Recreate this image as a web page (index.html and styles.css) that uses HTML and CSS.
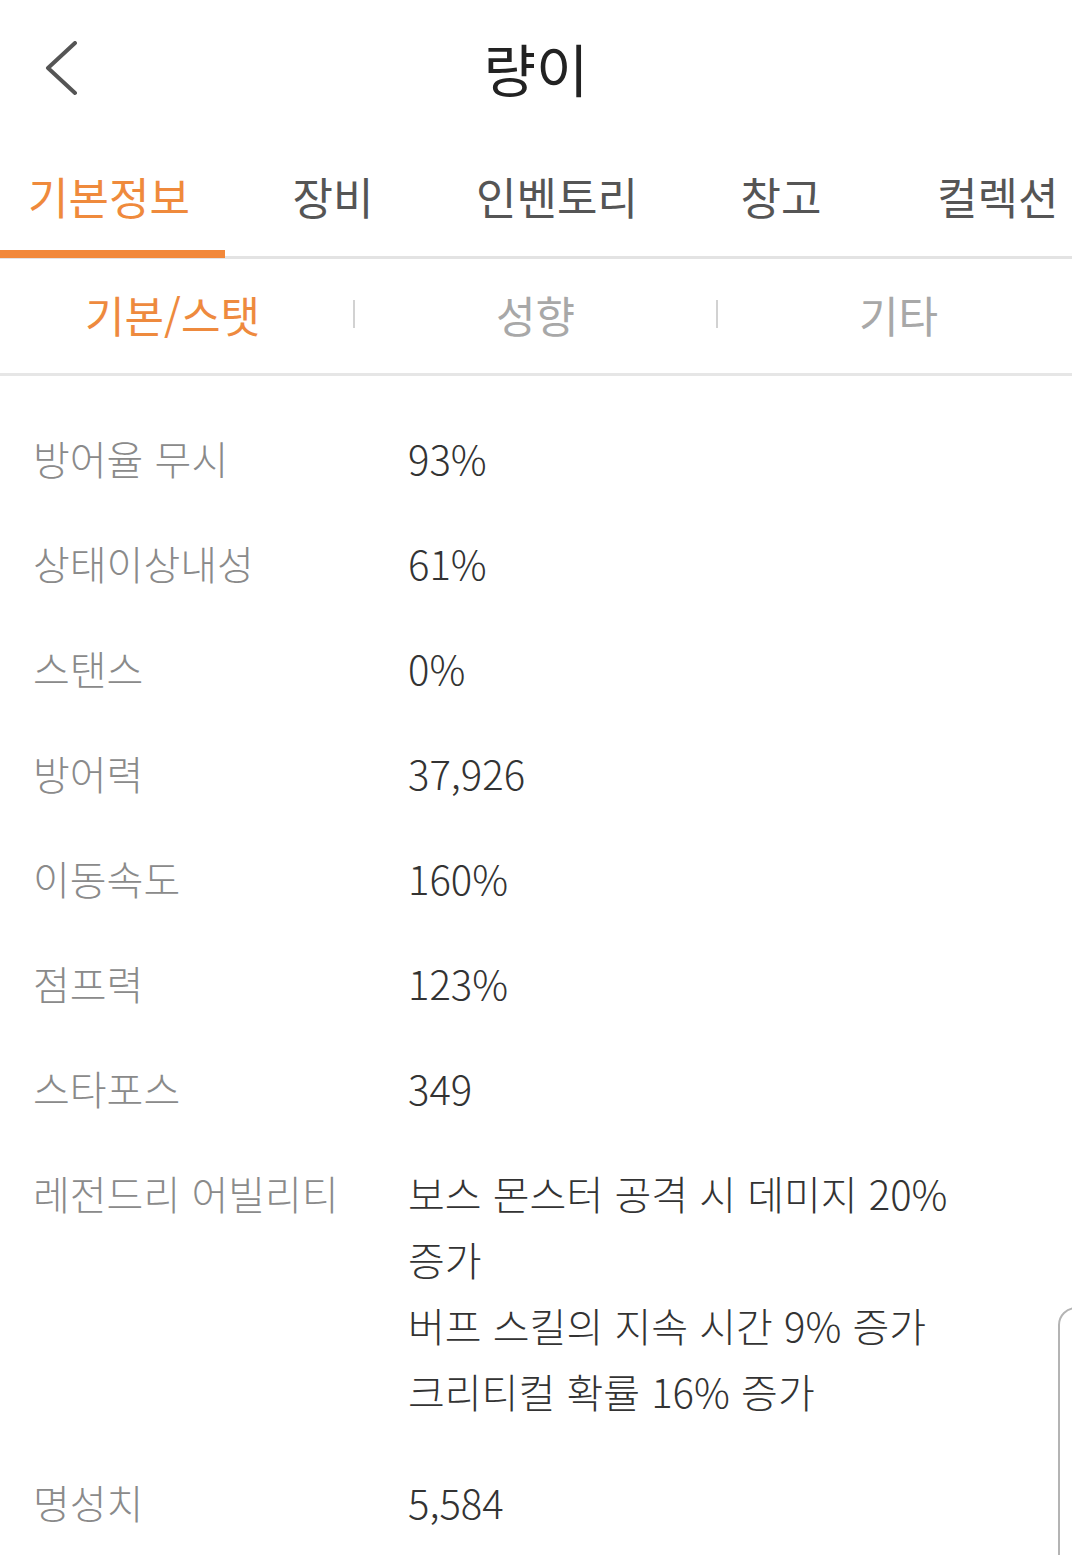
FILE: index.html
```html
<!DOCTYPE html>
<html lang="ko">
<head>
<meta charset="utf-8">
<title>량이</title>
<link rel="stylesheet" href="styles.css">
</head>
<body>
<div class="screen">
  <header class="header">
    <button class="back" aria-label="뒤로">
      <svg width="34" height="56" viewBox="0 0 34 56"><polyline points="31,2 4,27 31,52" fill="none" stroke="#555" stroke-width="4" stroke-linecap="round" stroke-linejoin="round"/></svg>
    </button>
    <h1 class="title">량이</h1>
    <span class="spacer"></span>
  </header>

  <nav class="tabs">
    <div class="tab active">기본정보</div>
    <div class="tab">장비</div>
    <div class="tab">인벤토리</div>
    <div class="tab">창고</div>
    <div class="tab">컬렉션</div>
  </nav>

  <nav class="subtabs">
    <div class="subtab active">기본/스탯</div>
    <div class="subtab">성향</div>
    <div class="subtab last">기타</div>
  </nav>

  <section class="stats">
    <div class="row"><div class="label">방어율 무시</div><div class="value">93%</div></div>
    <div class="row"><div class="label">상태이상내성</div><div class="value">61%</div></div>
    <div class="row"><div class="label">스탠스</div><div class="value">0%</div></div>
    <div class="row"><div class="label">방어력</div><div class="value">37,926</div></div>
    <div class="row"><div class="label">이동속도</div><div class="value">160%</div></div>
    <div class="row"><div class="label">점프력</div><div class="value">123%</div></div>
    <div class="row"><div class="label">스타포스</div><div class="value">349</div></div>
    <div class="row multi"><div class="label">레전드리 어빌리티</div><div class="value"><div>보스 몬스터 공격 시 데미지 20% 증가</div><div>버프 스킬의 지속 시간 9% 증가</div><div>크리티컬 확률 16% 증가</div></div></div>
    <div class="row"><div class="label">명성치</div><div class="value">5,584</div></div>
  </section>

  <div class="sheet-edge"></div>
</div>
</body>
</html>
```
FILE: styles.css
```css
html, body {
  margin: 0;
  padding: 0;
  background: #ffffff;
}
body {
  font-family: "Noto Sans CJK KR", "Noto Sans", sans-serif;
  font-weight: 300;
  color: #333;
}
.screen {
  position: relative;
  width: 1072px;
  height: 1555px;
  overflow: hidden;
}
.header {
  height: 135px;
  display: grid;
  grid-template-columns: 1fr auto 1fr;
  align-items: center;
}
.back {
  justify-self: start;
  margin-left: 44px;
  margin-top: 2px;
  padding: 0;
  border: 0;
  background: none;
  display: flex;
}
.title {
  margin: 0;
  font-size: 57px;
  font-weight: 400;
  color: #222;
  line-height: 1;
}
.tabs {
  height: 121px;
  display: flex;
  border-bottom: 3px solid #e3e3e3;
  margin-left: -3px;
}
.tab {
  flex: 0 0 224px;
  position: relative;
  display: flex;
  align-items: center;
  justify-content: center;
  font-size: 44px;
  color: #555;
  font-weight: 400;
}
.tab:last-child {
  justify-content: flex-start;
  padding-left: 44px;
}
.tab.active {
  color: #ef8a3c;
}
.tab.active::after {
  content: "";
  position: absolute;
  left: 3px;
  right: -4px;
  bottom: -2px;
  height: 8px;
  background: #f2883a;
}
.subtabs {
  height: 117px;
  display: flex;
  align-items: center;
  border-bottom: 3px solid #e6e6e6;
  margin-left: -8px;
  padding-bottom: 4px;
  box-sizing: border-box;
}
.subtab {
  flex: 0 0 361px;
  text-align: center;
  font-size: 43px;
  color: #a8a8a8;
  font-weight: 400;
  border-right: 2px solid #d2d2d2;
  line-height: 28px;
}
.subtab.last {
  border-right: 0;
}
.subtab.active {
  color: #ee8a3e;
}
.stats {
  padding-top: 29px;
}
.row {
  display: grid;
  grid-template-columns: 375px 1fr;
  padding: 19.5px 60px 19.5px 33px;
  line-height: 66px;
  font-size: 40px;
  word-break: keep-all;
}
.row.multi {
  padding-bottom: 25.5px;
}
.label {
  color: #8a8a8a;
}
.value {
  color: #333;
}
.sheet-edge {
  position: absolute;
  left: 1058px;
  top: 1307px;
  width: 60px;
  height: 300px;
  border: 2px solid #b4b4b4;
  border-top-left-radius: 18px;
}
```
